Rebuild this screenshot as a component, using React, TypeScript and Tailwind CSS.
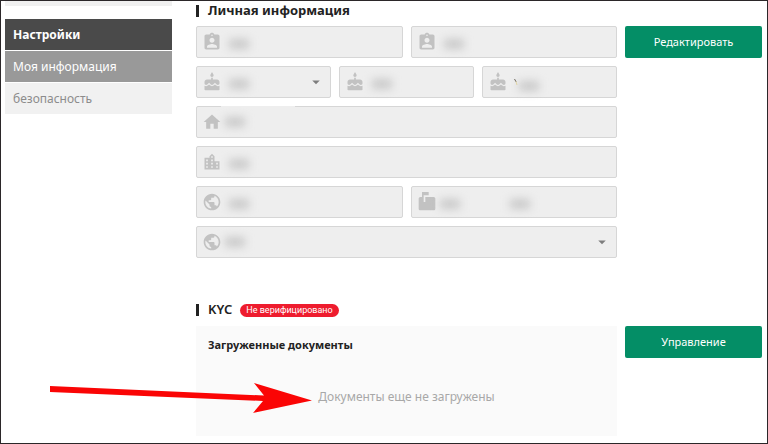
import { type ReactNode } from "react";
import type { IconType } from "react-icons";
import {
  MdArrowDropDown,
  MdAssignmentInd,
  MdCake,
  MdHome,
  MdLocationCity,
  MdMarkunreadMailbox,
  MdPublic,
} from "react-icons/md";

type FieldProps = {
  icon: IconType;
  label: string;
  select?: boolean;
  smudge?: string;
  children?: ReactNode;
};

// Value is hidden behind a soft smudge
function Smudge({ className = "" }: { className?: string }) {
  return (
    <span
      className={`pointer-events-none absolute h-2.5 w-5 bg-[#cacaca] blur-xs ${className}`}
    />
  );
}

function Field({
  icon: Icon,
  label,
  select = false,
  smudge = "left-8 top-3",
  children,
}: FieldProps) {
  return (
    <div className="relative flex h-8 min-w-0 flex-1 items-center rounded-xs border border-[#d6d6d6] bg-[#eeeeee] px-[5px]">
      <Icon className="size-5 shrink-0 text-[#c2c2c2]" />
      {select ? (
        <>
          <select
            aria-label={label}
            className="h-full min-w-0 flex-1 appearance-none bg-transparent outline-none"
          />
          <MdArrowDropDown className="pointer-events-none size-[18px] shrink-0 text-[#7d7d7d]" />
        </>
      ) : (
        <input
          type="text"
          readOnly
          aria-label={label}
          className="h-full min-w-0 flex-1 bg-transparent outline-none"
        />
      )}
      <Smudge className={smudge} />
      {children}
    </div>
  );
}

function Row({ children }: { children: ReactNode }) {
  return <div className="flex gap-2">{children}</div>;
}

function SectionTitle({ children }: { children: ReactNode }) {
  return (
    <div className="flex h-5 items-center">
      <span className="mr-[9px] h-3 w-[3px] bg-[#222222]" />
      {children}
    </div>
  );
}

function ActionButton({ children }: { children: ReactNode }) {
  return (
    <button
      type="button"
      className="h-8 w-[137px] shrink-0 rounded-xs bg-[#048e66] text-[11px] text-white"
    >
      {children}
    </button>
  );
}

function Sidebar() {
  return (
    <nav className="w-[167px] shrink-0 text-xs">
      <div className="mb-[13px] h-[5px] bg-[#f0f0f0]" />
      <h2 className="flex h-[31px] items-center bg-[#4a4a4a] px-2 font-bold text-white">
        Настройки
      </h2>
      <a
        href="#info"
        className="flex h-8 items-center border-t border-white bg-[#999999] px-2 text-white"
      >
        Моя информация
      </a>
      <a
        href="#security"
        className="flex h-8 items-center border-t border-white bg-[#f1f1f1] px-2 text-[#8c8c8c]"
      >
        безопасность
      </a>
    </nav>
  );
}

export default function App() {
  return (
    <div className="flex gap-6 overflow-hidden border border-[#2b2729] bg-white pb-[7px] pl-1 pr-[5px] font-['Noto_Sans',sans-serif]">
      <Sidebar />

      <main className="min-w-0 flex-1">
        {/* Personal information */}
        <section id="info">
          <SectionTitle>
            <h2 className="text-[13px] font-bold text-[#222222]">
              Личная информация
            </h2>
          </SectionTitle>
          <div className="mt-[5px] flex items-start gap-2">
            <div className="flex min-w-0 flex-1 flex-col gap-2">
              <Row>
                <Field icon={MdAssignmentInd} label="Имя" />
                <Field icon={MdAssignmentInd} label="Фамилия" />
              </Row>
              <Row>
                <Field icon={MdCake} label="День" select />
                <Field icon={MdCake} label="Месяц" />
                <Field icon={MdCake} label="Год" smudge="left-9 top-3.5">
                  <svg
                    viewBox="0 0 4 8"
                    className="pointer-events-none absolute left-[31px] top-[11px] h-2 w-1"
                  >
                    <path d="M0.5 1 L2.2 4" stroke="#6e6a60" strokeWidth="1" />
                    <path d="M2 3.5 L3 7" stroke="#e3d6a4" strokeWidth="1" />
                  </svg>
                </Field>
              </Row>
              <Row>
                <Field icon={MdHome} label="Адрес" smudge="left-7 top-2.5">
                  <span className="absolute -top-px left-6 h-px w-[74px] bg-[#eeeeee]" />
                </Field>
              </Row>
              <Row>
                <Field icon={MdLocationCity} label="Город" />
              </Row>
              <Row>
                <Field icon={MdPublic} label="Регион" />
                <Field
                  icon={MdMarkunreadMailbox}
                  label="Индекс"
                  smudge="left-7 top-3"
                >
                  <Smudge className="left-[98px] top-3" />
                </Field>
              </Row>
              <Row>
                <Field
                  icon={MdPublic}
                  label="Страна"
                  select
                  smudge="left-7 top-2.5"
                />
              </Row>
            </div>
            <ActionButton>Редактировать</ActionButton>
          </div>
        </section>

        {/* Verification */}
        <section className="mt-[42px]">
          <SectionTitle>
            <h2 className="text-[13px] font-semibold text-[#222222]">KYC</h2>
            <span className="ml-2 rounded-full bg-[#ee1c2e] px-1.5 font-['Roboto',sans-serif] text-[9px] leading-[13px] text-white">
              Не верифицировано
            </span>
          </SectionTitle>
          <div className="mt-[6px] flex items-start gap-2">
            <div className="relative h-[110px] min-w-0 flex-1 bg-[#fafafa] px-3 pt-[9px]">
              <h3 className="text-[11px] leading-5 font-bold text-[#222222]">
                Загруженные документы
              </h3>
              <p className="mt-8 text-center text-xs leading-5 text-[#a8a8a8]">
                Документы еще не загружены
              </p>
              <svg
                viewBox="0 0 264 34"
                className="pointer-events-none absolute -left-[146px] top-[55px] h-[34px] w-[264px]"
              >
                <path
                  d="M0 5 L214 14.5 L204 2 L262 19.5 L203 32 L213 20 L0 11 Z"
                  fill="#fa0505"
                />
              </svg>
            </div>
            <ActionButton>Управление</ActionButton>
          </div>
        </section>
      </main>
    </div>
  );
}
